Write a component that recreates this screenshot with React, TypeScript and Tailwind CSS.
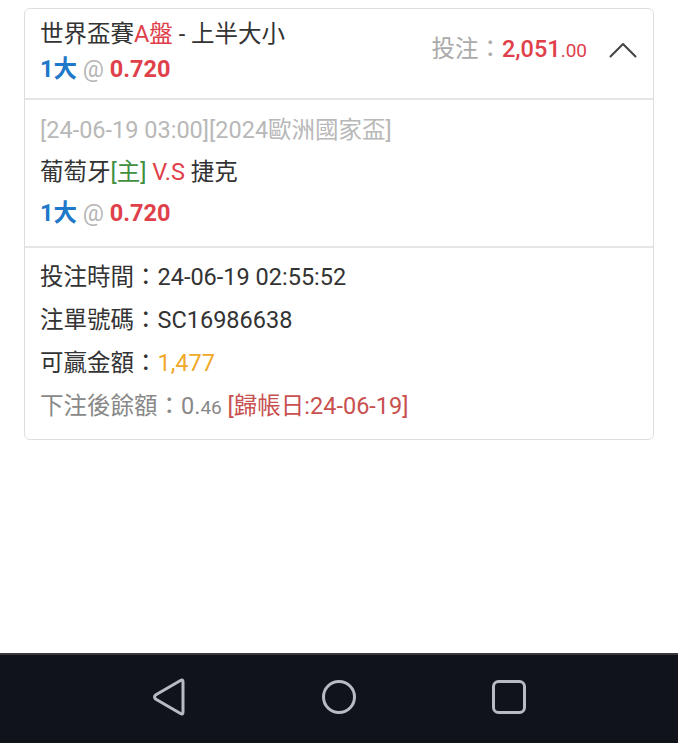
const font = "font-['Roboto','Noto_Sans_CJK_TC',sans-serif]";

export default function App() {
  return (
    <div className={`${font} w-[678px] h-[743px] bg-white flex flex-col text-[23.5px] text-[#333]`}>
      <div className="flex-1 pt-2 px-6">
        <div className="border border-[#dedede] rounded-md">
          {/* header */}
          <div className="flex items-center justify-between pl-[15px] pr-4 pt-[8px] pb-[11px] border-b-2 border-[#e6e6e6]">
            <div>
              <div className="leading-[35px]">
                世界盃賽<span className="text-[#e0404a]">A盤</span> - 上半大小
              </div>
              <div className="leading-[35px] font-bold">
                <span className="text-[#1f78c8]">1大</span>
                <span className="text-[#b5b5b5] font-normal"> @ </span>
                <span className="text-[#e0404a]">0.720</span>
              </div>
            </div>
            <div className="flex items-center gap-[22px] pb-1">
              <div className="leading-[35px]">
                <span className="text-[#aaa]">投注：</span>
                <span className="text-[#e0404a] font-medium">2,051</span>
                <span className="text-[#e0404a] text-[19px]">.00</span>
              </div>
              <svg width="28" height="16" viewBox="0 0 28 16" fill="none" stroke="#444" strokeWidth="2" strokeLinecap="round" strokeLinejoin="round">
                <path d="M1.5 14.5 L14 2 L26.5 14.5" />
              </svg>
            </div>
          </div>

          {/* match */}
          <div className="pl-[15px] pt-[9px] pb-[13px] border-b-2 border-[#e6e6e6]">
            <div className="leading-[42px] text-[#b8b8b8]">[24-06-19 03:00][2024歐洲國家盃]</div>
            <div className="leading-[42px]">
              葡萄牙<span className="text-[#3f8f3f]">[主]</span>{' '}
              <span className="text-[#e0404a]">V.S</span> 捷克
            </div>
            <div className="leading-[40px] font-bold">
              <span className="text-[#1f78c8]">1大</span>
              <span className="text-[#b5b5b5] font-normal"> @ </span>
              <span className="text-[#e0404a]">0.720</span>
            </div>
          </div>

          {/* details */}
          <div className="pl-[15px] pt-[8px] pb-[10px]">
            <div className="leading-[43px]">投注時間：24-06-19 02:55:52</div>
            <div className="leading-[43px]">注單號碼：SC16986638</div>
            <div className="leading-[43px]">
              可贏金額：<span className="text-[#f0a928]">1,477</span>
            </div>
            <div className="leading-[43px] text-[#888]">
              下注後餘額：0.<span className="text-[19px]">46</span>{' '}
              <span className="text-[#c8504f]">[歸帳日:24-06-19]</span>
            </div>
          </div>
        </div>
      </div>

      {/* android nav bar */}
      <div className="h-[90px] bg-[#11131a] border-t-2 border-[#3a3a3e] flex items-center justify-center gap-[134px] pb-1">
        <svg width="36" height="38" viewBox="0 0 36 38" fill="none" stroke="#b9bbc2" strokeWidth="3" strokeLinejoin="round">
          <path d="M32 4 L32 34 Q32 37 29.5 35.5 L4.5 21 Q2.5 19 4.5 17 L29.5 2.5 Q32 1 32 4 Z" />
        </svg>
        <svg width="36" height="36" viewBox="0 0 36 36" fill="none" stroke="#b9bbc2" strokeWidth="3">
          <circle cx="18" cy="18" r="15.5" />
        </svg>
        <svg width="36" height="36" viewBox="0 0 36 36" fill="none" stroke="#b9bbc2" strokeWidth="3">
          <rect x="2.5" y="2.5" width="31" height="31" rx="5" />
        </svg>
      </div>
    </div>
  );
}
